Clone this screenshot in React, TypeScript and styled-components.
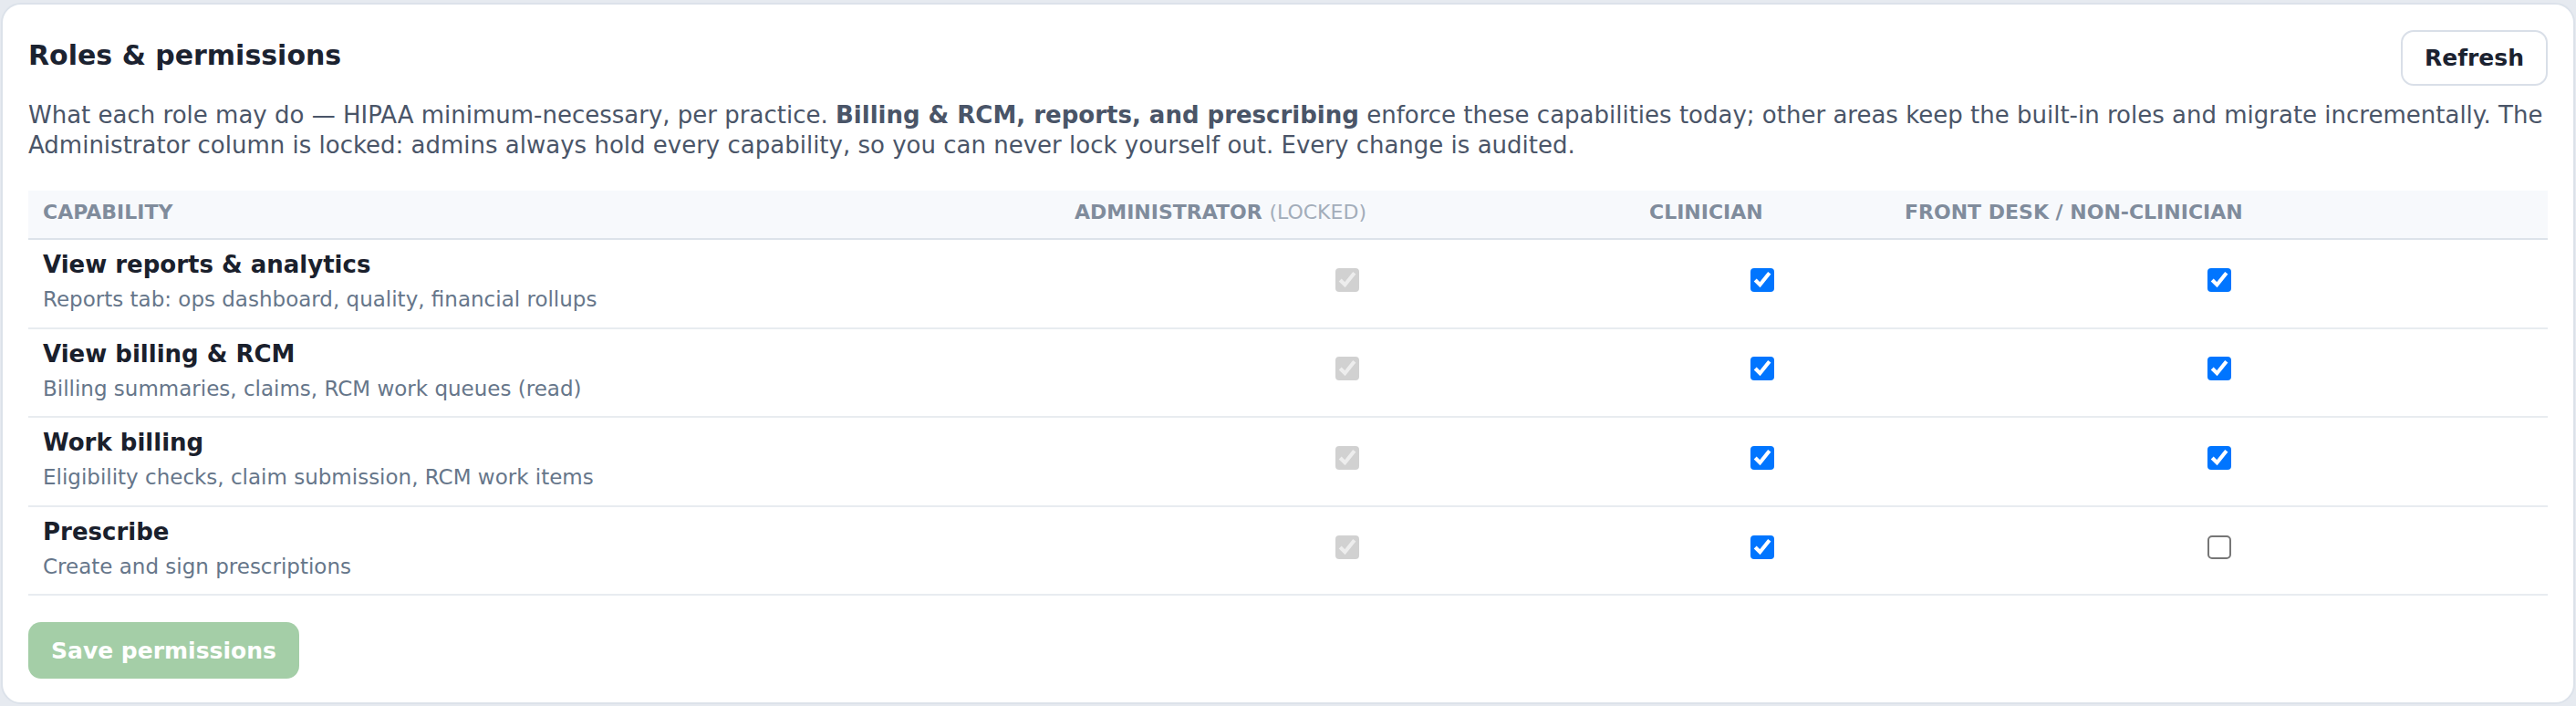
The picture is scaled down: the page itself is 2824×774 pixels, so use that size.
import React, { useState } from "react"
import styled, { createGlobalStyle } from "styled-components"

type RoleKey = 'clinician' | 'frontDesk'

interface Capability {
    key: string,
    title: string,
    subtext: string,
    clinician: boolean,
    frontDesk: boolean,
}

const capabilities: Capability[] = [
    { key: 'reports.view', title: 'View reports & analytics', subtext: 'Reports tab: ops dashboard, quality, financial rollups', clinician: true, frontDesk: true },
    { key: 'billing.view', title: 'View billing & RCM', subtext: 'Billing summaries, claims, RCM work queues (read)', clinician: true, frontDesk: true },
    { key: 'billing.work', title: 'Work billing', subtext: 'Eligibility checks, claim submission, RCM work items', clinician: true, frontDesk: true },
    { key: 'rx.prescribe', title: 'Prescribe', subtext: 'Create and sign prescriptions', clinician: true, frontDesk: false },
]

const GlobalStyle = createGlobalStyle`
    html, body {
        margin: 0;
        background: #e6eaf0;
        font-family: "DejaVu Sans", "Noto Sans", sans-serif;
    }
    #root {
        padding: 3px 1px 2px;
    }
`

const PermissionRow = (props: { cap: Capability, onToggle: (role: RoleKey) => void }) => {
    const { cap, onToggle } = props
    return (
        <Row>
            <CapabilityCell>
                <CapTitle>{cap.title}</CapTitle>
                <CapSubtext>{cap.subtext}</CapSubtext>
            </CapabilityCell>
            <CheckCell>
                <Check type="checkbox" checked disabled readOnly />
            </CheckCell>
            <CheckCell>
                <Check type="checkbox" checked={cap.clinician} onChange={() => onToggle('clinician')} />
            </CheckCell>
            <CheckCell>
                <Check type="checkbox" checked={cap.frontDesk} onChange={() => onToggle('frontDesk')} />
            </CheckCell>
        </Row>
    )
}

export default function App() {
    const [caps, setCaps] = useState(capabilities)

    const toggle = (key: string, role: RoleKey) => {
        setCaps(caps.map(c => c.key === key ? { ...c, [role]: !c[role] } : c))
    }

    return (
        <>
            <GlobalStyle />
            <Card>
                <Header>
                    <Title>Roles &amp; permissions</Title>
                    <RefreshButton>Refresh</RefreshButton>
                </Header>
                <Description>
                    What each role may do — HIPAA minimum-necessary, per practice. <strong>Billing &amp; RCM, reports, and prescribing</strong> enforce
                    these capabilities today; other areas keep the built-in roles and migrate incrementally. The Administrator column is locked:
                    admins always hold every capability, so you can never lock yourself out. Every change is audited.
                </Description>
                <Table>
                    <HeadRow>
                        <HeadCell>Capability</HeadCell>
                        <HeadCell>Administrator <Muted>(locked)</Muted></HeadCell>
                        <HeadCell>Clinician</HeadCell>
                        <HeadCell>Front desk / non-clinician</HeadCell>
                    </HeadRow>
                    {caps.map(c => (
                        <PermissionRow key={c.key} cap={c} onToggle={role => toggle(c.key, role)} />
                    ))}
                </Table>
                <SaveButton disabled>Save permissions</SaveButton>
            </Card>
        </>
    )
}

const Card = styled.div`
    background: #fff;
    border: 2px solid #dce2ea;
    border-radius: 22px;
    padding: 28px 28px 26px;
`

const Header = styled.div`
    display: flex;
    justify-content: space-between;
    align-items: flex-start;
`

const Title = styled.h2`
    margin: 10px 0 0;
    font-size: 30px;
    line-height: 36px;
    font-weight: 700;
    color: #1b2230;
`

const RefreshButton = styled.button`
    height: 61px;
    padding: 0 24px;
    background: #fff;
    border: 2px solid #d9dfe8;
    border-radius: 14px;
    font-family: inherit;
    font-size: 25px;
    font-weight: 700;
    color: #1b2230;
    cursor: pointer;
`

const Description = styled.p`
    margin: 16px 0 33px;
    font-size: 26px;
    line-height: 33px;
    color: #4a5568;

    strong {
        font-weight: 700;
    }
`

const Table = styled.div`
    display: grid;
    grid-template-columns: 1131px 630px 280px 1fr;
`

const HeadRow = styled.div`
    display: contents;
`

const HeadCell = styled.div`
    height: 54px;
    box-sizing: border-box;
    display: flex;
    align-items: center;
    padding: 0 16px 4px;
    background: #f7f9fc;
    border-bottom: 2px solid #dde3ea;
    font-size: 22px;
    line-height: 26px;
    font-weight: 700;
    text-transform: uppercase;
    color: #808c9c;
    white-space: pre;
`

const Muted = styled.span`
    font-weight: 400;
    color: #a3adba;
`

const Row = styled.div`
    display: contents;
`

const CapabilityCell = styled.div`
    padding: 12px 16px 16.6px;
    border-bottom: 2px solid #e8ecf0;
`

const CapTitle = styled.div`
    font-size: 26px;
    line-height: 30px;
    font-weight: 700;
    color: #1a202c;
`

const CapSubtext = styled.div`
    margin-top: 9px;
    font-size: 23px;
    line-height: 28px;
    color: #66768a;
`

const CheckCell = styled.div`
    display: flex;
    align-items: center;
    justify-content: center;
    padding-bottom: 8px;
    border-bottom: 2px solid #e8ecf0;
`

const Check = styled.input`
    zoom: 2;
    margin: 0;
    cursor: pointer;

    &:disabled {
        cursor: default;
    }
`

const SaveButton = styled.button`
    margin-top: 29px;
    height: 62px;
    padding: 0 25px;
    background: #a4cea7;
    border: none;
    border-radius: 14px;
    font-family: inherit;
    font-size: 25px;
    font-weight: 700;
    color: #fff;
`
